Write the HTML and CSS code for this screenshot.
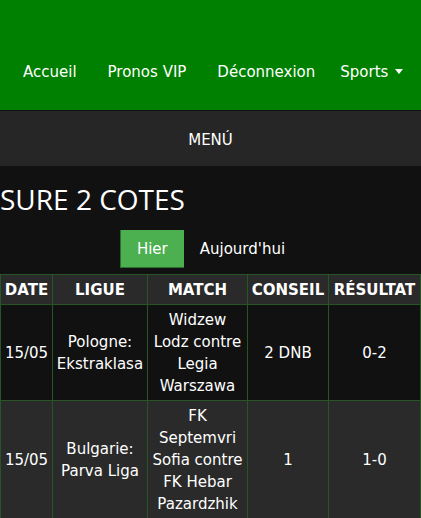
FILE: index.html
```html
<!DOCTYPE html>
<html lang="fr">
<head>
    <meta charset="UTF-8">
    <meta name="viewport" content="width=device-width, initial-scale=1.0">
    <title>Sure 2 Cotes</title>
    <link rel="stylesheet" href="styles.css">
</head>
<body>
    <div class="topbar">
        <a href="#">Accueil</a>
        <a href="#">Pronos VIP</a>
        <a href="#">Déconnexion</a>
        <a href="#" class="dropdown">Sports <span class="caret"></span></a>
    </div>
    <div class="menubar">MENÚ</div>

    <h1 class="titre">SURE 2 COTES</h1>

    <div class="onglets">
        <button class="onglet actif">Hier</button>
        <button class="onglet">Aujourd'hui</button>
    </div>

    <table class="pronos">
        <thead>
            <tr>
                <th class="c-date">DATE</th>
                <th class="c-ligue">LIGUE</th>
                <th class="c-match">MATCH</th>
                <th class="c-conseil">CONSEIL</th>
                <th class="c-res">RÉSULTAT</th>
            </tr>
        </thead>
        <tbody>
            <tr>
                <td>15/05</td>
                <td>Pologne: Ekstraklasa</td>
                <td>Widzew Lodz contre Legia Warszawa</td>
                <td>2 DNB</td>
                <td>0-2</td>
            </tr>
            <tr>
                <td>15/05</td>
                <td>Bulgarie: Parva Liga</td>
                <td>FK Septemvri Sofia contre FK Hebar Pazardzhik</td>
                <td>1</td>
                <td>1-0</td>
            </tr>
        </tbody>
    </table>
</body>
</html>
```

FILE: styles.css
```css
body {
    font-family: "DejaVu Sans", Verdana, sans-serif;
    background-color: #111;
    color: #fff;
    margin: 0;
}
.topbar {
    background-color: #008000;
    height: 110px;
    box-sizing: border-box;
    padding: 62px 0 0 7px;
    display: flex;
}
.topbar a {
    color: #fff;
    text-decoration: none;
    font-size: 15px;
    line-height: 20px;
    padding: 0 15px 0 16px;
    white-space: nowrap;
}
.topbar a:nth-child(3) {
    padding-right: 9px;
}
.caret {
    display: inline-block;
    width: 0;
    height: 0;
    border-left: 4.5px solid transparent;
    border-right: 4.5px solid transparent;
    border-top: 5px solid #fff;
    vertical-align: 3px;
    margin-left: 2px;
}
.menubar {
    background-color: #262626;
    height: 52px;
    line-height: 52px;
    padding-top: 3px;
    text-align: center;
    font-size: 15px;
    margin-top: 1px;
}
.titre {
    font-family: "Open Sans", sans-serif;
    font-weight: 400;
    font-size: 28px;
    margin: 14px 0 12px;
}
.onglets {
    text-align: center;
    font-size: 0;
    margin-bottom: 6px;
}
.onglet {
    font-family: "DejaVu Sans", Verdana, sans-serif;
    font-size: 15px;
    line-height: 22px;
    padding: 8px 16px;
    background: none;
    color: #fff;
    border: none;
    cursor: pointer;
}
.onglet.actif {
    background-color: #4caf50;
    border-left: 1px solid #2f6e31;
    border-bottom: 1px solid #2f6e31;
    padding-bottom: 7px;
}
.pronos {
    border-collapse: collapse;
    width: 421px;
    font-size: 15px;
    line-height: 22px;
}
.pronos th, .pronos td {
    border: 1px solid #265526;
    padding: 4px 2px 3px;
    text-align: center;
}
.pronos thead tr {
    background-color: #2a2a2a;
}
.pronos tbody tr:nth-child(even) {
    background-color: #2a2a2a;
}
.c-date { width: 47px; }
.c-ligue { width: 90px; }
.c-match { width: 95px; }
.c-conseil { width: 76px; }
```
